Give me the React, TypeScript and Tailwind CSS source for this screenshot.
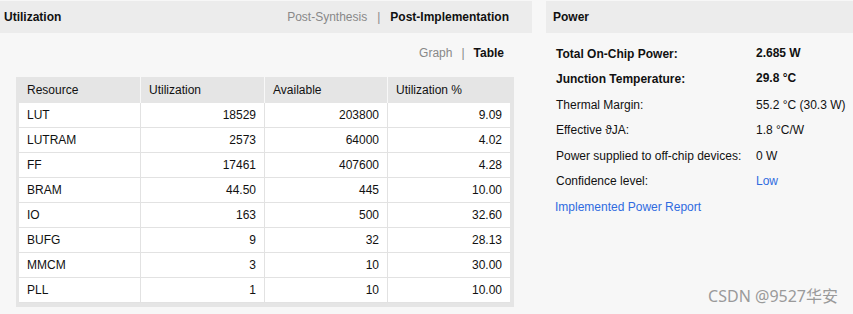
import React from "react";

const rows: [string, string, string, string][] = [
  ["LUT", "18529", "203800", "9.09"],
  ["LUTRAM", "2573", "64000", "4.02"],
  ["FF", "17461", "407600", "4.28"],
  ["BRAM", "44.50", "445", "10.00"],
  ["IO", "163", "500", "32.60"],
  ["BUFG", "9", "32", "28.13"],
  ["MMCM", "3", "10", "30.00"],
  ["PLL", "1", "10", "10.00"],
];

const power: { label: string; value: string; bold?: boolean; link?: boolean }[] = [
  { label: "Total On-Chip Power:", value: "2.685 W", bold: true },
  { label: "Junction Temperature:", value: "29.8 °C", bold: true },
  { label: "Thermal Margin:", value: "55.2 °C (30.3 W)" },
  { label: "Effective ϑJA:", value: "1.8 °C/W" },
  { label: "Power supplied to off-chip devices:", value: "0 W" },
  { label: "Confidence level:", value: "Low", link: true },
];

export default function App() {
  return (
    <div
      className="relative w-[853px] h-[314px] overflow-hidden bg-[#f7f7f7] text-[12px] text-[#111] flex gap-[14px] pt-[1px]"
      style={{ fontFamily: "'Liberation Sans', Arial, sans-serif" }}
    >
      {/* Utilization */}
      <section className="w-[532px] flex flex-col">
        <div className="h-[32px] bg-[#ececec] flex items-center justify-between pl-[4px] pr-[23px]">
          <span className="font-bold">Utilization</span>
          <div className="flex items-center">
            <span className="text-[#888]">Post-Synthesis</span>
            <span className="text-[#888] mx-[10px]">|</span>
            <span className="font-bold">Post-Implementation</span>
          </div>
        </div>

        <div className="h-[39px] flex items-center justify-end pr-[28px]">
          <span className="text-[#888]">Graph</span>
          <span className="text-[#888] mx-[9px]">|</span>
          <span className="font-bold">Table</span>
        </div>

        <div className="mt-[5px] ml-[16px] w-[498px] bg-[#e5e5e5] pl-[3px] pr-[4px] pb-[4px]">
          <div className="grid grid-cols-[122px_124px_123px_122px] h-[26px] items-stretch">
            {["Resource", "Utilization", "Available", "Utilization %"].map((h, i) => (
              <div
                key={h}
                className={`flex items-center pl-[8px] ${i < 3 ? "border-r border-[#f8f8f8]" : ""}`}
              >
                {h}
              </div>
            ))}
          </div>
          {rows.map((r) => (
            <div key={r[0]} className="grid grid-cols-[122px_124px_123px_122px] h-[25px] bg-white">
              {r.map((c, i) => (
                <div
                  key={i}
                  className={`flex items-center border-b border-[#e2e2e2] ${
                    i === 0 ? "pl-[8px]" : "justify-end pr-[8px]"
                  } ${i < 3 ? "border-r" : ""}`}
                >
                  {c}
                </div>
              ))}
            </div>
          ))}
        </div>
      </section>

      {/* Power */}
      <section className="flex-1 flex flex-col">
        <div className="h-[32px] bg-[#ececec] flex items-center pl-[7px]">
          <span className="font-bold">Power</span>
        </div>
        <div className="pl-[10px] pt-[8px]">
          {power.map((p) => (
            <div key={p.label} className="h-[25.5px] flex items-center">
              <span className={`w-[200px] ${p.bold ? "font-bold" : ""}`}>{p.label}</span>
              <span
                className={`${p.bold ? "font-bold -mt-[2px]" : ""} ${p.link ? "text-[#2f6be0]" : ""}`}
              >
                {p.value}
              </span>
            </div>
          ))}
          <div className="h-[25.5px] flex items-center -ml-[1px] text-[#2f6be0]">Implemented Power Report</div>
        </div>
      </section>

      <span
        className="absolute right-[15px] bottom-[6px] text-[16px] text-[#9a9a9a]"
        style={{ fontFamily: "'Noto Sans', 'Noto Sans CJK SC', sans-serif" }}
      >
        CSDN @9527华安
      </span>
    </div>
  );
}
